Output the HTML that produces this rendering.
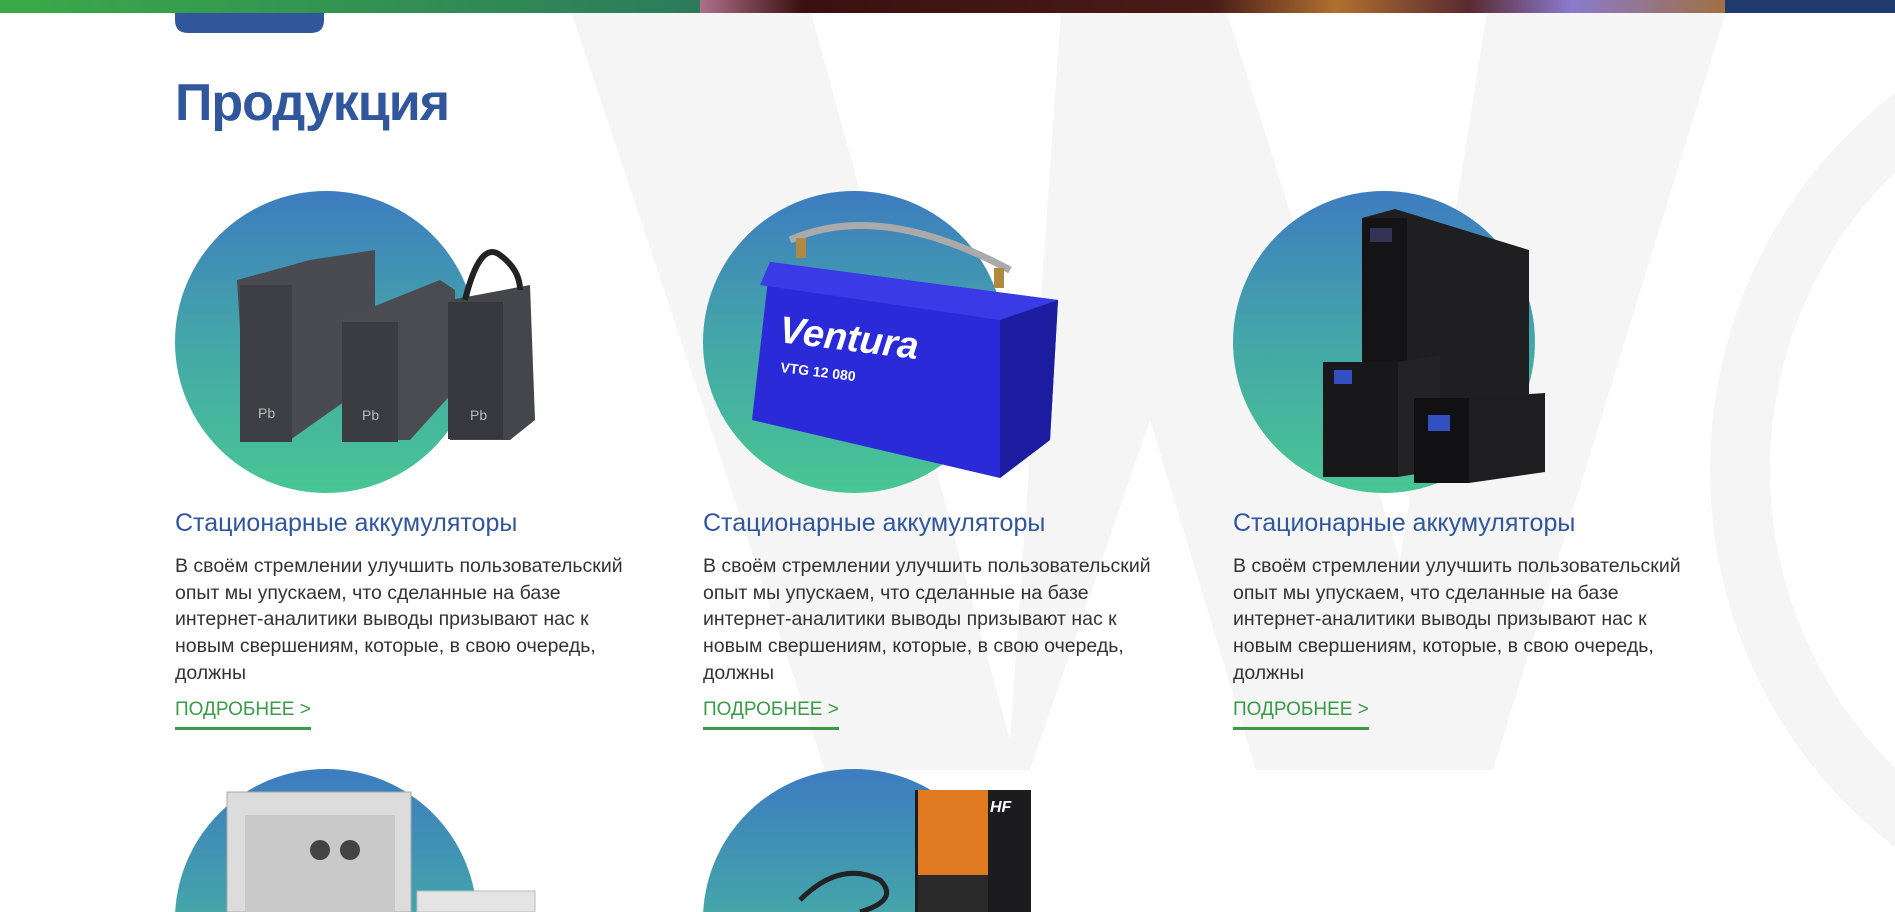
<!DOCTYPE html>
<html style="overflow:hidden;height:912px;"><head><meta charset="utf-8"><style>
html,body{margin:0;padding:0;background:#fff;}
body{width:1895px;height:912px;overflow:hidden;font-family:"Liberation Sans",sans-serif;}
#w{position:relative;width:1895px;height:912px;overflow:hidden;}
.abs{position:absolute;}
h1{position:absolute;left:175px;top:77px;margin:0;font-size:52px;line-height:52px;color:#30569c;font-weight:bold;letter-spacing:-1px;}
.circ{position:absolute;width:302px;height:302px;border-radius:50%;background:linear-gradient(180deg,#3d7cc0 0%,#44a7a8 50%,#48c693 100%);}
.t{position:absolute;font-size:25px;color:#30569c;line-height:30px;white-space:nowrap;}
.p{position:absolute;font-size:19.5px;color:#333;line-height:26.7px;white-space:nowrap;}
.l{position:absolute;font-size:19px;color:#3a9a45;line-height:22px;padding-bottom:6px;border-bottom:3px solid #3a9a45;white-space:nowrap;}
</style></head><body><div id="w">
<svg class="abs" style="left:0;top:0" width="1895" height="912">
<g fill="#f5f5f5">
<polygon points="571,12 811,12 1010,740 1061,12 1227,12 1400,560 1487,12 1726,12 1493,770 1256,770 1150,420 1030,770 825,770"/>
</g>
<ellipse cx="2170" cy="470" rx="430" ry="440" fill="none" stroke="#f5f5f5" stroke-width="60"/>
<defs><linearGradient id="g" x1="0" x2="1"><stop offset="0" stop-color="#3aaa48"/><stop offset="1" stop-color="#2c7b5c"/></linearGradient>
<linearGradient id="im" x1="0" x2="1"><stop offset="0" stop-color="#b0708a"/><stop offset=".1" stop-color="#3a1010"/><stop offset=".5" stop-color="#4a1c18"/><stop offset=".62" stop-color="#b07030"/><stop offset=".75" stop-color="#5a2a30"/><stop offset=".85" stop-color="#8a7ad0"/><stop offset="1" stop-color="#a07040"/></linearGradient></defs>
<rect x="0" y="0" width="700" height="13" fill="url(#g)"/>
<rect x="700" y="0" width="1025" height="13" fill="url(#im)"/>
<rect x="1725" y="0" width="170" height="13" fill="#1f3a6e"/>
<path d="M175 13 H324 V20 Q324 33 311 33 H188 Q175 33 175 20Z" fill="#30569c"/>
</svg>
<h1>Продукция</h1>

<div class="circ" style="left:175px;top:191px"></div>
<div class="circ" style="left:703px;top:191px"></div>
<div class="circ" style="left:1233px;top:191px"></div>
<div class="circ" style="left:175px;top:769px"></div>
<div class="circ" style="left:703px;top:769px"></div>

<svg class="abs" style="left:0;top:0" width="1895" height="912">
<polygon points="237,280 310,260 375,250 375,380 290,440 247,440" fill="#4a4b50"/>
<rect x="240" y="285" width="52" height="157" fill="#3e3f44"/>
<polygon points="340,320 440,280 455,290 455,390 410,440 345,440" fill="#4b4c51"/>
<rect x="342" y="322" width="56" height="120" fill="#3b3c41"/>
<polygon points="450,300 530,285 535,420 510,440 450,440" fill="#45464b"/>
<rect x="448" y="302" width="55" height="137" fill="#37383d"/>
<path d="M465 300 Q480 240 500 255 Q520 270 520 290" fill="none" stroke="#222" stroke-width="6"/>
<text x="258" y="418" font-size="14" fill="#bbb" font-family="Liberation Sans">Pb</text>
<text x="362" y="420" font-size="14" fill="#bbb" font-family="Liberation Sans">Pb</text>
<text x="470" y="420" font-size="14" fill="#bbb" font-family="Liberation Sans">Pb</text>
<path d="M790 240 Q880 200 1010 270" fill="none" stroke="#aaa" stroke-width="7"/>
<polygon points="770,262 1058,300 1050,440 1000,478 752,420" fill="#2a2ad8"/>
<polygon points="1000,320 1058,300 1050,440 1000,478" fill="#1c1ca0"/>
<polygon points="770,262 1058,300 1000,320 760,285" fill="#3a3ae6"/>
<text x="778" y="342" font-size="38" font-style="italic" font-weight="bold" fill="#fff" font-family="Liberation Sans" transform="rotate(7 778 342)">Ventura</text>
<text x="780" y="372" font-size="14" font-weight="bold" fill="#fff" font-family="Liberation Sans" transform="rotate(7 780 372)">VTG 12 080</text>
<rect x="796" y="238" width="10" height="20" fill="#b08a40"/>
<rect x="994" y="268" width="10" height="20" fill="#b08a40"/>
<polygon points="1362,218 1395,209 1529,250 1529,455 1480,465 1362,440" fill="#1f1f22"/>
<rect x="1362" y="218" width="45" height="230" fill="#141416"/>
<rect x="1370" y="228" width="22" height="14" fill="#335"/>
<rect x="1323" y="362" width="75" height="115" fill="#18181a"/>
<polygon points="1398,362 1440,355 1440,470 1398,477" fill="#232326"/>
<rect x="1334" y="370" width="18" height="14" fill="#3350c0"/>
<rect x="1414" y="398" width="55" height="85" fill="#111113"/>
<polygon points="1469,398 1545,393 1545,472 1469,483" fill="#1e1e21"/>
<rect x="1428" y="415" width="22" height="16" fill="#3350c0"/>
<rect x="227" y="792" width="184" height="120" fill="#dcdcdc" stroke="#aaa"/>
<rect x="245" y="815" width="150" height="97" fill="#c9c9c9"/>
<circle cx="320" cy="850" r="10" fill="#444"/><circle cx="350" cy="850" r="10" fill="#444"/>
<rect x="417" y="891" width="118" height="21" fill="#e4e4e4" stroke="#bbb"/>
<rect x="915" y="790" width="116" height="122" fill="#1c1c1e"/>
<rect x="918" y="790" width="70" height="122" fill="#e07a20"/>
<rect x="918" y="875" width="70" height="37" fill="#2a2a2a"/>
<text x="990" y="812" font-size="16" font-weight="bold" font-style="italic" fill="#fff" font-family="Liberation Sans">HF</text>
<path d="M800 900 Q840 860 880 880 Q900 900 860 912" fill="none" stroke="#222" stroke-width="5"/>
</svg>

<div class="t" style="left:175px;top:508px">Стационарные аккумуляторы</div>
<div class="t" style="left:703px;top:508px">Стационарные аккумуляторы</div>
<div class="t" style="left:1233px;top:508px">Стационарные аккумуляторы</div>

<div class="p" style="left:175px;top:553px">В своём стремлении улучшить пользовательский<br>опыт мы упускаем, что сделанные на базе<br>интернет-аналитики выводы призывают нас к<br>новым свершениям, которые, в свою очередь,<br>должны</div>
<div class="p" style="left:703px;top:553px">В своём стремлении улучшить пользовательский<br>опыт мы упускаем, что сделанные на базе<br>интернет-аналитики выводы призывают нас к<br>новым свершениям, которые, в свою очередь,<br>должны</div>
<div class="p" style="left:1233px;top:553px">В своём стремлении улучшить пользовательский<br>опыт мы упускаем, что сделанные на базе<br>интернет-аналитики выводы призывают нас к<br>новым свершениям, которые, в свою очередь,<br>должны</div>

<div class="l" style="left:175px;top:699px">ПОДРОБНЕЕ &gt;</div>
<div class="l" style="left:703px;top:699px">ПОДРОБНЕЕ &gt;</div>
<div class="l" style="left:1233px;top:699px">ПОДРОБНЕЕ &gt;</div>
</div></body></html>
